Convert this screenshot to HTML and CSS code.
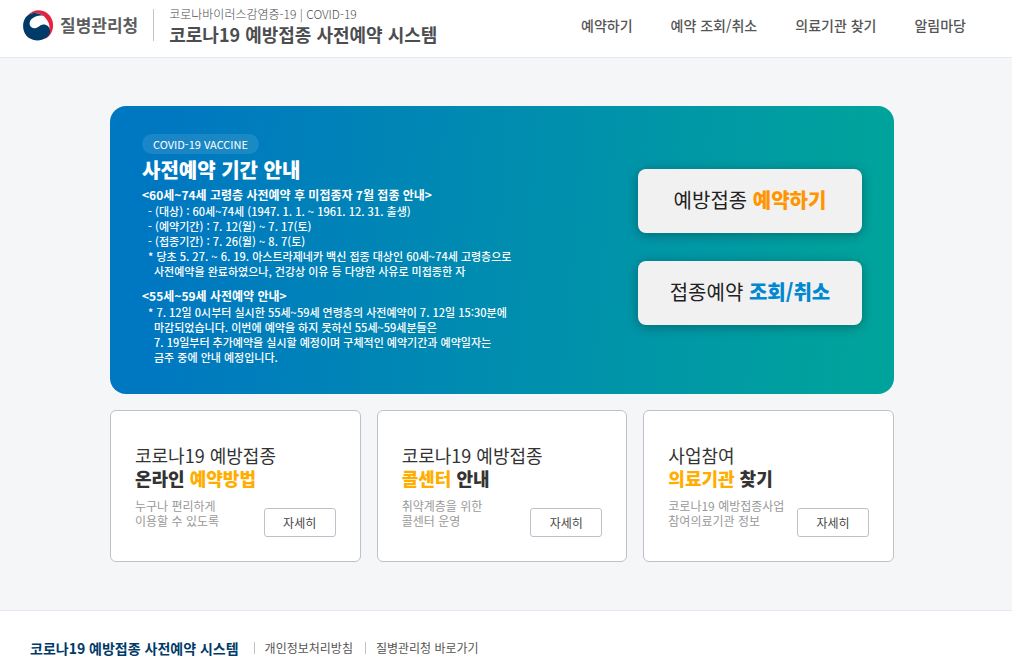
FILE: index.html
```html
<!DOCTYPE html>
<html lang="ko">
<head>
<meta charset="utf-8">
<meta name="viewport" content="width=device-width, initial-scale=1">
<title>코로나19 예방접종 사전예약 시스템</title>
<link rel="stylesheet" href="styles.css">
</head>
<body>
<header class="header">
  <a class="agency" href="#">
    <svg class="agency-mark" viewBox="4 3 32 32" aria-hidden="true">
      <path fill="#e8213f" d="M10 9C17 1 31 3 34.500 15C36.500 23 33 30 27 33C32 27 33 19 29 14C25 7 17 5 10 9z"/>
      <path fill="#003a68" d="M11 8.500C3 13 3 28 12 32.500C20 37 31 33 32 26C32.500 20 27 17 23 19C20 21 18 23 15 22C10 20.500 11 14 15 12C18 10 21 9 26 10C21 6.500 15 6 11 8.500z"/>
    </svg>
    <span>질병관리청</span>
  </a>
  <a class="site" href="#">
    <span class="site-sub">코로나바이러스감염증-19 | COVID-19</span>
    <span class="site-name">코로나19 예방접종 사전예약 시스템</span>
  </a>
  <nav class="nav">
    <a href="#">예약하기</a>
    <a href="#">예약 조회/취소</a>
    <a href="#">의료기관 찾기</a>
    <a href="#">알림마당</a>
  </nav>
</header>
<main class="main">
  <section class="banner">
    <div class="notice">
      <span class="badge">COVID-19 VACCINE</span>
      <h1>사전예약 기간 안내</h1>
      <h2>&lt;60세~74세 고령층 사전예약 후 미접종자 7월 접종 안내&gt;</h2>
      <ul>
        <li>- (대상) : 60세~74세 (1947. 1. 1. ~ 1961. 12. 31. 출생)</li>
        <li>- (예약기간) : 7. 12(월) ~ 7. 17(토)</li>
        <li>- (접종기간) : 7. 26(월) ~ 8. 7(토)</li>
        <li>* 당초 5. 27. ~ 6. 19. 아스트라제네카 백신 접종 대상인 60세~74세 고령층으로<br>사전예약을 완료하였으나, 건강상 이유 등 다양한 사유로 미접종한 자</li>
      </ul>
      <h2>&lt;55세~59세 사전예약 안내&gt;</h2>
      <ul>
        <li>* 7. 12일 0시부터 실시한 55세~59세 연령층의 사전예약이 7. 12일 15:30분에<br>마감되었습니다. 이번에 예약을 하지 못하신 55세~59세분들은<br>7. 19일부터 추가예약을 실시할 예정이며 구체적인 예약기간과 예약일자는<br>금주 중에 안내 예정입니다.</li>
      </ul>
    </div>
    <div class="actions">
      <button type="button" class="action">예방접종 <b class="orange">예약하기</b></button>
      <button type="button" class="action">접종예약 <b class="blue">조회/취소</b></button>
    </div>
  </section>
  <section class="cards">
    <article class="card">
      <h3>코로나19 예방접종<br><b>온라인 <span class="amber">예약방법</span></b></h3>
      <div class="card-foot">
        <p>누구나 편리하게<br>이용할 수 있도록</p>
        <button type="button" class="more">자세히</button>
      </div>
    </article>
    <article class="card">
      <h3>코로나19 예방접종<br><b><span class="amber">콜센터</span> 안내</b></h3>
      <div class="card-foot">
        <p>취약계층을 위한<br>콜센터 운영</p>
        <button type="button" class="more">자세히</button>
      </div>
    </article>
    <article class="card">
      <h3>사업참여<br><b><span class="amber">의료기관</span> 찾기</b></h3>
      <div class="card-foot">
        <p>코로나19 예방접종사업<br>참여의료기관 정보</p>
        <button type="button" class="more">자세히</button>
      </div>
    </article>
  </section>
</main>
<footer class="footer">
  <strong>코로나19 예방접종 사전예약 시스템</strong>
  <a href="#">개인정보처리방침</a>
  <a href="#">질병관리청 바로가기</a>
</footer>
</body>
</html>
```
FILE: styles.css
```css
* {
  box-sizing: border-box;
}

body {
  margin: 0;
  background: #f5f6f8;
  color: #333;
  font-family: "Noto Sans CJK KR", sans-serif;
  font-size: 12px;
  line-height: 15px;
  word-break: keep-all;
}

a {
  color: inherit;
  text-decoration: none;
}

h1, h2, h3, p, ul {
  margin: 0;
  padding: 0;
}

button {
  font-family: inherit;
  cursor: pointer;
}

.header {
  display: flex;
  align-items: center;
  min-height: 58px;
  padding: 0 46px 8px 22px;
  background: #fff;
  border-bottom: 1px solid #e8e8f2;
}

.agency {
  display: flex;
  align-items: center;
  gap: 6px;
  height: 32px;
  padding-right: 15px;
  border-right: 1px solid #c4c4cc;
  color: #5c5d60;
  font-size: 17px;
  font-weight: 700;
  white-space: nowrap;
}

.agency-mark {
  width: 32px;
  height: 32px;
}

.site {
  display: flex;
  flex-direction: column;
  padding: 2px 0 0 15px;
  color: #4c4d50;
  white-space: nowrap;
}

.site-sub {
  font-weight: 300;
  line-height: 16px;
}

.site-name {
  font-size: 18px;
  font-weight: 700;
  line-height: 24px;
}

.nav {
  display: flex;
  gap: 38px;
  margin-left: auto;
  color: #555;
  font-size: 14px;
  font-weight: 500;
  line-height: 20px;
  white-space: nowrap;
}

.main {
  display: flex;
  flex-direction: column;
  gap: 16px;
  padding: 48px 118px 48px 110px;
}

.banner {
  display: flex;
  justify-content: space-between;
  align-items: center;
  min-height: 288px;
  padding: 27px 32px 29px;
  border-radius: 16px;
  background: linear-gradient(95deg, #0078c1 8%, #00a39c 96%);
  color: #fff;
}

.badge {
  display: inline-block;
  padding: 0 11px;
  border-radius: 10px;
  background: rgba(255, 255, 255, 0.1);
  font-size: 11px;
  font-weight: 400;
  line-height: 20px;
}

.notice h1 {
  font-size: 20px;
  font-weight: 900;
  line-height: 32px;
}

.notice h2 {
  font-size: 12px;
  font-weight: 700;
  line-height: 18px;
}

.notice ul {
  padding-left: 12px;
  font-size: 11px;
  font-weight: 500;
  list-style: none;
}

.notice li {
  text-indent: -6px;
}

.notice ul + h2 {
  margin-top: 8px;
}

.actions {
  display: flex;
  flex-direction: column;
  gap: 28px;
  padding-bottom: 4px;
}

.action {
  width: 224px;
  height: 64px;
  padding: 0 0 3px;
  border: 0;
  border-radius: 8px;
  background: #f1f1f1;
  box-shadow: 0 2px 12px rgba(0, 0, 0, 0.3);
  color: #222;
  font-size: 20px;
}

.action b {
  font-weight: 900;
}

.orange {
  color: #ff9500;
}

.blue {
  color: #0088d0;
}

.cards {
  display: grid;
  grid-template-columns: repeat(3, 1fr);
  gap: 16px;
}

.card {
  min-height: 152px;
  padding: 33px 24px 24px;
  border: 1px solid #c0c0ca;
  border-radius: 6px;
  background: #fff;
}

.card h3 {
  font-size: 18px;
  font-weight: 400;
  line-height: 23px;
}

.card b {
  font-weight: 900;
}

.amber {
  color: #ffae00;
}

.card-foot {
  display: flex;
  justify-content: space-between;
  align-items: flex-end;
  margin-top: 8px;
}

.card-foot p {
  padding-bottom: 9px;
  color: #999;
  white-space: nowrap;
}

.more {
  width: 72px;
  height: 29px;
  border: 1px solid #c0c0ca;
  border-radius: 3px;
  background: #fff;
  color: #444;
  font-size: 12px;
}

.footer {
  display: flex;
  align-items: center;
  padding: 27px 30px 12px;
  border-top: 1px solid #e8e8f2;
  background: #fff;
  color: #555;
}

.footer strong {
  margin-right: 15px;
  color: #003a68;
  font-size: 14px;
  line-height: 20px;
}

.footer a {
  padding: 0 12px 0 10px;
  border-left: 1px solid #c0c0ca;
  line-height: 12px;
}
```
